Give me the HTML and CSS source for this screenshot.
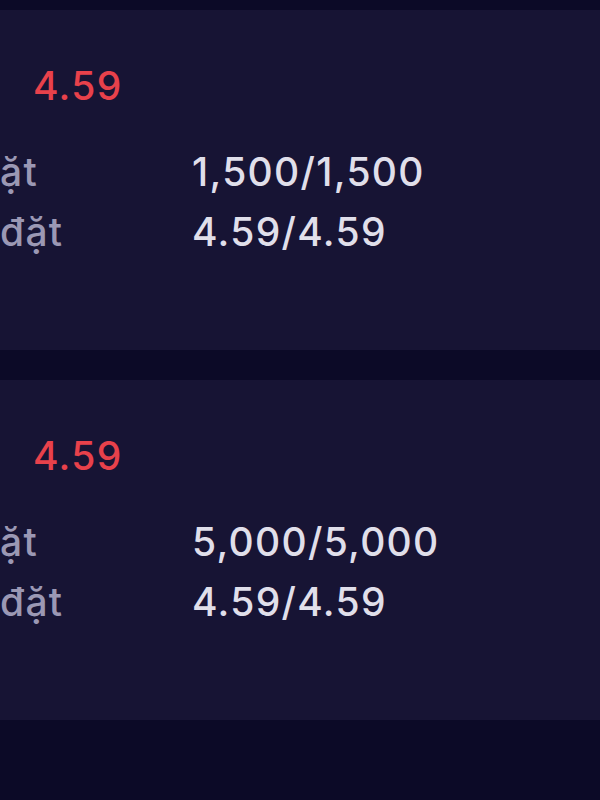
FILE: index.html
```html
<!DOCTYPE html>
<html lang="vi">
<head>
    <meta charset="UTF-8">
    <meta name="viewport" content="width=device-width, initial-scale=1.0">
    <title>Lệnh đặt</title>
    <link rel="stylesheet" href="styles.css">
</head>
<body>
    <div class="list">
        <div class="card">
            <div class="price">4.59</div>
            <div class="row">
                <span class="label">ặt</span>
                <span class="value">1,500/1,500</span>
            </div>
            <div class="row">
                <span class="label">đặt</span>
                <span class="value">4.59/4.59</span>
            </div>
        </div>

        <div class="card">
            <div class="price">4.59</div>
            <div class="row">
                <span class="label">ặt</span>
                <span class="value">5,000/5,000</span>
            </div>
            <div class="row">
                <span class="label">đặt</span>
                <span class="value">4.59/4.59</span>
            </div>
        </div>
    </div>
</body>
</html>
```

FILE: styles.css
```css
body {
    margin: 0;
    background-color: #0c0a27;
    font-family: Inter, "Noto Sans", sans-serif;
    font-size: 39px;
    font-weight: 500;
    letter-spacing: 1.3px;
    overflow: hidden;
}
.list {
    display: flex;
    flex-direction: column;
    gap: 30px;
    padding-top: 10px;
}
.card {
    background: #171434;
    height: 340px;
    box-sizing: border-box;
    padding-top: 46px;
}
.price {
    color: #e8414b;
    line-height: 60px;
    padding-left: 33px;
    margin-bottom: 26px;
}
.row {
    display: grid;
    grid-template-columns: 192px 1fr;
    line-height: 60px;
}
.label {
    color: #9b98b4;
}
.value {
    color: #e0dfea;
}
```
